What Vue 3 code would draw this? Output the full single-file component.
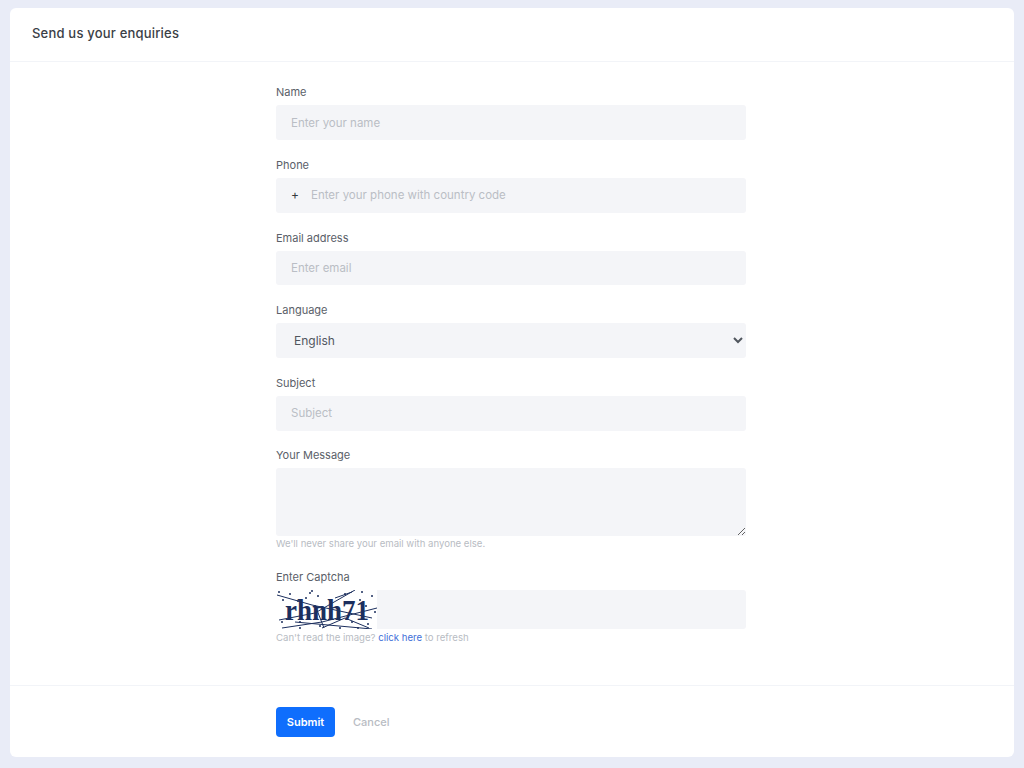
<script setup>
const stars = [[279,592],[290,594],[306,598],[312,591],[318,596],[345,594],[362,592],[283,600],[298,601],[360,600],[372,596],[282,622],[300,622],[320,626],[340,628],[352,622],[368,624],[375,612],[300,628],[358,628],[330,600],[366,606],[310,593]]
const lines = [
  'M277 595 L312 605 L372 618',
  'M279 620 L315 613 L355 590',
  'M282 628 L322 622 L377 608',
  'M295 622 L372 629',
  'M315 605 L324 628',
  'M322 628 L345 618 L369 628',
  'M335 598 L352 592'
]
</script>

<template>
  <div class="page">
    <section class="card">
      <header class="head"><h1>Send us your enquiries</h1></header>
      <form class="body" @submit.prevent>
        <div class="col">
          <div class="field">
            <label>Name</label>
            <input class="ctl" placeholder="Enter your name" />
          </div>
          <div class="field">
            <label>Phone</label>
            <div class="ctl group">
              <span class="plus">+</span>
              <input placeholder="Enter your phone with country code" />
            </div>
          </div>
          <div class="field">
            <label>Email address</label>
            <input class="ctl" placeholder="Enter email" />
          </div>
          <div class="field">
            <label>Language</label>
            <select class="ctl sel"><option>English</option></select>
          </div>
          <div class="field">
            <label>Subject</label>
            <input class="ctl" placeholder="Subject" />
          </div>
          <div class="field msg">
            <label>Your Message</label>
            <textarea class="ctl area"></textarea>
            <small>We'll never share your email with anyone else.</small>
          </div>
          <div class="field">
            <label>Enter Captcha</label>
            <div class="captcha">
              <svg class="cimg" width="101" height="39" viewBox="276 590 101 39">
                <rect x="276" y="590" width="101" height="39" fill="#fff" />
                <text x="285" y="620" textLength="84" lengthAdjust="spacingAndGlyphs" class="ctext">rhnh71</text>
                <path v-for="(d, i) in lines" :key="i" :d="d" fill="none" stroke="#1c2f5e" stroke-width="1" />
                <circle v-for="(s, i) in stars" :key="'s' + i" :cx="s[0]" :cy="s[1]" r="1" fill="#1c2f5e" />
              </svg>
            </div>
            <small class="tight">Can't read the image? <a href="#" @click.prevent>click here</a> to refresh</small>
          </div>
        </div>
      </form>
      <footer class="foot">
        <div class="col actions">
          <button class="submit" type="submit">Submit</button>
          <button class="cancel" type="button">Cancel</button>
        </div>
      </footer>
    </section>
  </div>
</template>

<style>
html, body { margin: 0; background: #e9ecf7; }
</style>

<style scoped>
.page {
  height: 768px;
  box-sizing: border-box;
  padding: 8px 10px 11px;
  font-family: Inter, "Liberation Sans", sans-serif;
}
.card {
  height: 100%;
  background: #fff;
  border-radius: 6px;
  display: flex;
  flex-direction: column;
}
.head {
  height: 54px;
  box-sizing: border-box;
  border-bottom: 1px solid #f2f4f8;
  padding: 0 22px;
  display: flex;
  align-items: center;
}
h1 {
  margin: 0 0 3px;
  font-size: 13px;
  font-weight: 500;
  color: #3a4046;
  letter-spacing: .2px;
}
.body { flex: 1; padding-top: 20.4px; }
.col { width: 470px; margin: 0 0 0 266px; }
.field { margin-bottom: 14.85px; }
label {
  display: block;
  height: 23px;
  line-height: 20px;
  font-size: 11px;
  color: #5a6068;
}
.ctl {
  display: block;
  width: 100%;
  height: 34.75px;
  box-sizing: border-box;
  border: 0;
  border-radius: 3px;
  background: #f4f5f8;
  padding: 0 15px;
  font: inherit;
  font-size: 11.5px;
  color: #50565e;
  outline: none;
}
input::placeholder { color: #babec5; opacity: 1; }
.group { display: flex; align-items: center; }
.plus { width: 20px; flex: none; color: #343a40; font-size: 12px; margin-top: -2px; }
.group input {
  flex: 1;
  border: 0;
  background: none;
  padding: 0;
  font: inherit;
  outline: none;
}
.sel { padding-left: 14px; font-size: 12px; }
.area { height: 68px; resize: vertical; padding-top: 8px; }
.msg { margin-bottom: 15.2px; }
small {
  display: block;
  margin-top: 1px;
  font-size: 9.6px;
  line-height: 14px;
  color: #b8bcc3;
}
.tight { margin-top: 2px; }
a { color: #3f6fd8; text-decoration: none; }
.captcha { height: 39px; background: #f4f5f8; border-radius: 3px; }
.cimg { display: block; }
.ctext {
  font-family: "Liberation Serif", serif;
  font-weight: 700;
  font-size: 30px;
  fill: #1c2f5e;
}
.foot {
  height: 72px;
  box-sizing: border-box;
  border-top: 1px solid #f2f4f8;
  display: flex;
  align-items: center;
}
.actions { display: flex; align-items: center; gap: 18px; }
.submit {
  width: 59px;
  height: 30px;
  border: 0;
  border-radius: 4px;
  background: #0f6efd;
  color: #fff;
  font: inherit;
  font-size: 11px;
  font-weight: 600;
  padding: 0;
}
.cancel {
  border: 0;
  background: none;
  padding: 0;
  font: inherit;
  font-size: 11px;
  font-weight: 500;
  color: #b8bcc3;
}
</style>
